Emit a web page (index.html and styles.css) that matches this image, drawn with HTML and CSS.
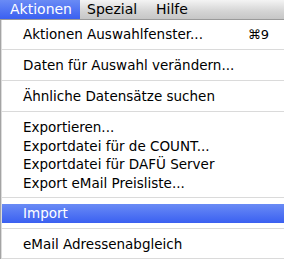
FILE: index.html
```html
<!DOCTYPE html>
<html lang="de">
<head>
    <meta charset="UTF-8">
    <title>Aktionen Menü</title>
    <link rel="stylesheet" href="styles.css">
</head>
<body>
    <!-- Menu bar -->
    <header class="menubar">
        <span class="menu-title active">Aktionen</span>
        <span class="menu-title spezial">Spezial</span>
        <span class="menu-title">Hilfe</span>
    </header>

    <!-- Dropdown -->
    <div class="dropdown">
        <div class="group">
            <div class="item">
                <span>Aktionen Auswahlfenster...</span>
                <span class="shortcut">⌘9</span>
            </div>
        </div>
        <div class="group">
            <div class="item">Daten für Auswahl verändern...</div>
        </div>
        <div class="group">
            <div class="item">Ähnliche Datensätze suchen</div>
        </div>
        <div class="group export">
            <div class="item">Exportieren...</div>
            <div class="item">Exportdatei für de COUNT...</div>
            <div class="item">Exportdatei für DAFÜ Server</div>
            <div class="item">Export eMail Preisliste...</div>
        </div>
        <div class="group">
            <div class="item selected">Import</div>
        </div>
        <div class="group">
            <div class="item">eMail Adressenabgleich</div>
        </div>
    </div>
</body>
</html>
```

FILE: styles.css
```css
* {
    margin: 0;
    padding: 0;
    box-sizing: border-box;
}

body {
    font-family: 'DejaVu Sans', 'Lucida Grande', sans-serif;
    font-size: 13.5px;
    color: #000;
    background: #fff;
    width: 284px;
    height: 263px;
    overflow: hidden;
}

.menubar {
    display: flex;
    height: 20px;
    background: linear-gradient(#f4f4f4, #d4d4d4 60%, #c6c6c6);
    border-bottom: 1px solid #9a9a9a;
}

.menu-title {
    flex-shrink: 0;
    padding-left: 10px;
    line-height: 19px;
    font-size: 14px;
}

.menu-title.active {
    width: 80px;
    color: #fff;
    background: linear-gradient(#6a8bf5, #3a60f1);
}

.menu-title.spezial {
    width: 66px;
    padding-left: 7px;
}

.dropdown {
    display: flex;
    flex-direction: column;
    border-left: 1px solid #a4a4a4;
    box-shadow: inset 1px 0 0 #dcdcdc;
    padding-top: 5px;
}

.group {
    padding: 0 0 5px 1px;
    border-bottom: 1px solid #dadada;
}

.group + .group {
    padding-top: 6px;
}

.group:last-child {
    padding-bottom: 4px;
}

.item {
    display: flex;
    justify-content: space-between;
    height: 19px;
    line-height: 19px;
    padding: 0 15px 0 21px;
}

.export .item {
    height: 18.5px;
    line-height: 18.5px;
}

.item.selected {
    color: #fff;
    background: linear-gradient(#6a8bf5, #3a60f1);
}

.shortcut {
    font-size: 13px;
}
```
